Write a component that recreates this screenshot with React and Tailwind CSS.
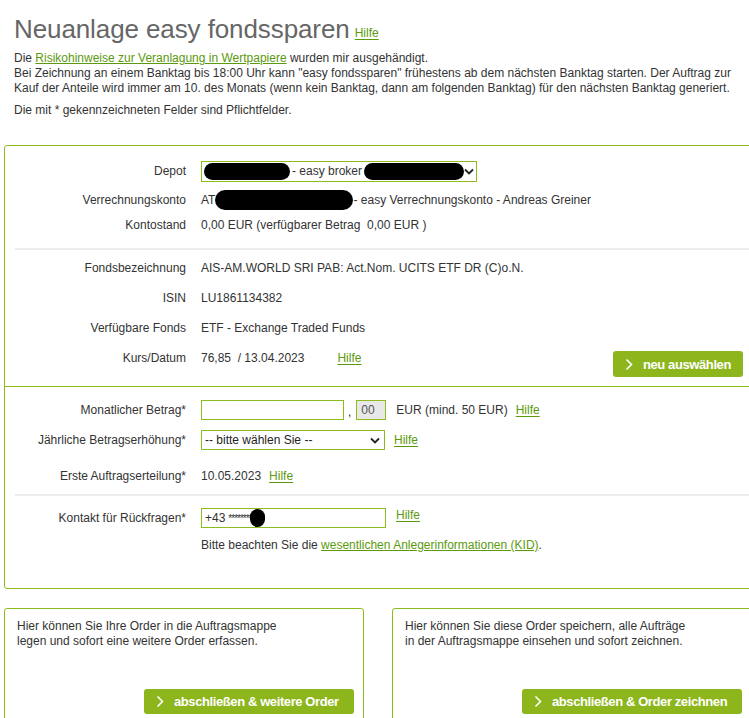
import React from "react";

const Chevron = () => (
  <svg width="8" height="13" viewBox="0 0 8 13" className="mr-[10px] shrink-0">
    <polyline points="1.5,1.5 6.5,6.5 1.5,11.5" fill="none" stroke="white" strokeWidth="1.6" />
  </svg>
);

const Hilfe = ({ className = "" }) => (
  <a className={"text-[#5b9a0d] underline underline-offset-2 decoration-[#5b9a0d] " + className}>Hilfe</a>
);

const Blob = ({ w, h = 18, className = "" }) => (
  <span className={"inline-block shrink-0 bg-black rounded-full " + className} style={{ width: w, height: h }} />
);

const Row = ({ label, children, className = "" }) => (
  <div className={"flex items-center " + className}>
    <div className="w-[181px] shrink-0 text-right text-[#333]">{label}</div>
    <div className="ml-[15px] flex items-center flex-1 whitespace-nowrap">{children}</div>
  </div>
);

const GreenButton = ({ children, className = "" }) => (
  <button className={"flex items-center whitespace-nowrap bg-[#8cb61c] text-white font-bold text-[13px] tracking-[-0.4px] rounded-[3px] pl-[12px] pr-[10px] " + className}>
    <Chevron />
    {children}
  </button>
);

export default function App() {
  return (
    <div className="w-[749px] h-[718px] overflow-hidden bg-white text-[12px] leading-[15px] text-[#333]" style={{ fontFamily: '"Liberation Sans", Arial, sans-serif' }}>
      {/* Header */}
      <div className="pl-[14px] pt-[14px]">
        <div className="flex items-end">
          <h1 className="text-[26px] leading-[30px] text-[#666] font-normal tracking-[-0.1px]">Neuanlage easy fondssparen</h1>
          <Hilfe className="ml-[5px] mb-[3px]" />
        </div>
        <p className="mt-[7px]">
          Die <a className="text-[#5b9a0d] underline decoration-[#5b9a0d]">Risikohinweise zur Veranlagung in Wertpapiere</a> wurden mir ausgehändigt.
          <br />
          Bei Zeichnung an einem Banktag bis 18:00 Uhr kann "easy fondssparen" frühestens ab dem nächsten Banktag starten. Der Auftrag zur
          <br />
          Kauf der Anteile wird immer am 10. des Monats (wenn kein Banktag, dann am folgenden Banktag) für den nächsten Banktag generiert.
        </p>
        <p className="mt-[7px]">Die mit * gekennzeichneten Felder sind Pflichtfelder.</p>
      </div>

      {/* Main form box */}
      <div className="ml-[4px] mt-[27px] w-[765px] border border-[#8cbc1e] rounded-[3px]">
        <div className="pt-[15px]">
          <Row label="Depot">
            <div className="w-[276px] h-[21px] border border-[#8cbc1e] flex items-center pl-[2px] pr-[4px] whitespace-nowrap">
              <Blob w={86} h={17} />
              <span className="ml-[2px]">- easy broker</span>
              <Blob w={100} h={17} className="ml-[2px]" />
              <svg width="10" height="7" viewBox="0 0 10 7" className="ml-auto shrink-0">
                <polyline points="1,1.5 5,5.5 9,1.5" fill="none" stroke="#222" strokeWidth="1.8" />
              </svg>
            </div>
          </Row>
          <Row label="Verrechnungskonto" className="mt-[8px] h-[20px]">
            <span>AT</span>
            <Blob w={138} h={20} />
            <span>- easy Verrechnungskonto - Andreas Greiner</span>
          </Row>
          <Row label="Kontostand" className="mt-[5px] h-[20px]">
            <span>0,00 EUR (verfügbarer Betrag&nbsp; 0,00 EUR )</span>
          </Row>
        </div>
        <div className="ml-[10px] mt-[13px] h-[2px] bg-[#ececec]" />

        <div className="pt-[8px] pb-[9px]">
          <Row label="Fondsbezeichnung" className="h-[20px]">
            <span>AIS-AM.WORLD SRI PAB: Act.Nom. UCITS ETF DR (C)o.N.</span>
          </Row>
          <Row label="ISIN" className="mt-[10px] h-[20px]">
            <span>LU1861134382</span>
          </Row>
          <Row label="Verfügbare Fonds" className="mt-[10px] h-[20px]">
            <span>ETF - Exchange Traded Funds</span>
          </Row>
          <div className="flex items-start mt-[10px]">
            <div className="w-[181px] shrink-0 text-right h-[20px] leading-[20px]">Kurs/Datum</div>
            <div className="ml-[15px] flex items-center h-[20px] flex-1">
              <span>76,85&nbsp; / 13.04.2023</span>
              <Hilfe className="ml-[33px]" />
            </div>
            <GreenButton className="mt-[3px] h-[26px] w-[130px] mr-[25px]">neu auswählen</GreenButton>
          </div>
        </div>
        <div className="h-[1px] bg-[#8cbc1e]" />

        <div className="pt-[13px]">
          <Row label="Monatlicher Betrag*" className="h-[20px]">
            <div className="w-[143px] h-[20px] border border-[#8cbc1e]" />
            <span className="ml-[4px] mt-[4px]">,</span>
            <div className="ml-[5px] w-[30px] h-[20px] border border-[#8cbc1e] bg-[#e8e8e8] text-[#555] flex items-center pl-[4px]">00</div>
            <span className="ml-[10px]">EUR (mind. 50 EUR)</span>
            <Hilfe className="ml-[8px]" />
          </Row>
          <Row label="Jährliche Betragserhöhung*" className="mt-[10px] h-[20px]">
            <div className="w-[184px] h-[20px] border border-[#8cbc1e] flex items-center pl-[3px] pr-[4px] text-[#222]">
              <span>-- bitte wählen Sie --</span>
              <svg width="10" height="7" viewBox="0 0 10 7" className="ml-auto shrink-0">
                <polyline points="1,1.5 5,5.5 9,1.5" fill="none" stroke="#222" strokeWidth="1.8" />
              </svg>
            </div>
            <Hilfe className="ml-[9px]" />
          </Row>
          <Row label="Erste Auftragserteilung*" className="mt-[16px] h-[20px]">
            <span>10.05.2023</span>
            <Hilfe className="ml-[8px]" />
          </Row>
        </div>
        <div className="ml-[10px] mt-[8px] h-[2px] bg-[#ececec]" />

        <div className="pt-[12px] pb-[35px]">
          <div className="flex items-start">
            <div className="w-[181px] shrink-0 text-right h-[20px] leading-[20px]">Kontakt für Rückfragen*</div>
            <div className="ml-[15px]">
              <div className="flex items-start">
                <div className="w-[185px] h-[20px] border border-[#8cbc1e] flex items-center pl-[3px]">
                  <span>+43</span>
                  <span className="ml-[3px] text-[10px] tracking-[-1px]">********</span>
                  <Blob w={15} h={18} className="-ml-[2px]" />
                </div>
                <Hilfe className="ml-[10px]" />
              </div>
              <p className="mt-[10px]">
                Bitte beachten Sie die <a className="text-[#5b9a0d] underline decoration-[#5b9a0d]">wesentlichen Anlegerinformationen (KID)</a>.
              </p>
            </div>
          </div>
        </div>
      </div>

      {/* Bottom boxes */}
      <div className="flex mt-[19px] ml-[4px] gap-[28px]">
        <div className="w-[360px] shrink-0 h-[130px] border border-[#8cbc1e] rounded-[3px] pl-[12px] pt-[10px] flex flex-col">
          <p>
            Hier können Sie Ihre Order in die Auftragsmappe
            <br />
            legen und sofort eine weitere Order erfassen.
          </p>
          <GreenButton className="mt-[40px] ml-[127px] h-[25px] w-[210px]">abschließen &amp; weitere Order</GreenButton>
        </div>
        <div className="w-[362px] shrink-0 h-[130px] border border-[#8cbc1e] rounded-[3px] pl-[12px] pt-[10px] flex flex-col">
          <p>
            Hier können Sie diese Order speichern, alle Aufträge
            <br />
            in der Auftragsmappe einsehen und sofort zeichnen.
          </p>
          <GreenButton className="mt-[40px] ml-[117px] h-[25px] w-[220px]">abschließen &amp; Order zeichnen</GreenButton>
        </div>
      </div>
    </div>
  );
}
